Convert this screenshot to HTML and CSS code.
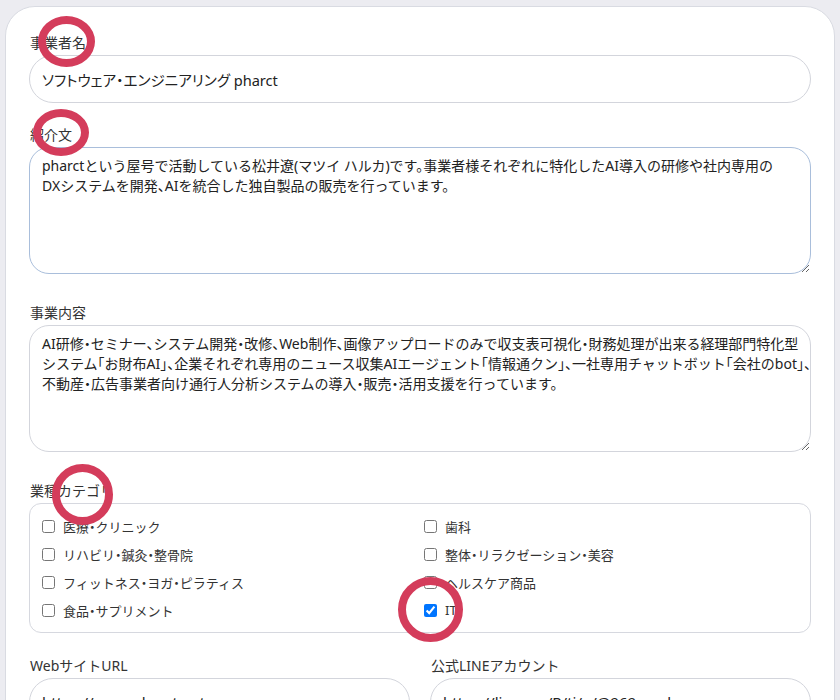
FILE: index.html
```html
<!DOCTYPE html>
<html lang="ja">
<head>
<meta charset="utf-8">
<title>事業者情報</title>
<link rel="stylesheet" href="styles.css">
</head>
<body>
<form class="card">
  <div class="field">
    <label class="label" for="name">事業者名</label>
    <input class="input input-name" id="name" type="text" value="ソフトウェア・エンジニアリング pharct">
  </div>
  <div class="field field-ta">
    <label class="label" for="intro">紹介文</label>
    <textarea class="textarea textarea-focus" id="intro" wrap="off">pharctという屋号で活動している松井遼(マツイ ハルカ)です。事業者様それぞれに特化したAI導入の研修や社内専用の
DXシステムを開発、AIを統合した独自製品の販売を行っています。</textarea>
  </div>
  <div class="field field-ta">
    <label class="label" for="biz">事業内容</label>
    <textarea class="textarea" id="biz" wrap="off">AI研修・セミナー、システム開発・改修、Web制作、画像アップロードのみで収支表可視化・財務処理が出来る経理部門特化型
システム「お財布AI」、企業それぞれ専用のニュース収集AIエージェント「情報通クン」、一社専用チャットボット「会社のbot」、
不動産・広告事業者向け通行人分析システムの導入・販売・活用支援を行っています。</textarea>
  </div>
  <div class="field field-check">
    <div class="label">業種カテゴリ</div>
    <div class="checkbox-box">
      <label class="check"><input type="checkbox"><span>医療・クリニック</span></label>
      <label class="check"><input type="checkbox"><span>歯科</span></label>
      <label class="check"><input type="checkbox"><span>リハビリ・鍼灸・整骨院</span></label>
      <label class="check"><input type="checkbox"><span>整体・リラクゼーション・美容</span></label>
      <label class="check"><input type="checkbox"><span>フィットネス・ヨガ・ピラティス</span></label>
      <label class="check"><input type="checkbox"><span>ヘルスケア商品</span></label>
      <label class="check"><input type="checkbox"><span>食品・サプリメント</span></label>
      <label class="check"><input type="checkbox" checked><span>IT</span></label>
    </div>
  </div>
  <div class="row">
    <div class="field">
      <label class="label" for="web">WebサイトURL</label>
      <input class="input" id="web" type="text" value="https://www.pharct.net">
    </div>
    <div class="field">
      <label class="label" for="line">公式LINEアカウント</label>
      <input class="input" id="line" type="text" value="https://line.me/R/ti/p/@969xxesh">
    </div>
  </div>
</form>
<div class="ring ring-1"></div>
<div class="ring ring-2"></div>
<div class="ring ring-3"></div>
<div class="ring ring-4"></div>
</body>
</html>
```
FILE: styles.css
```css
html, body {
  margin: 0;
  padding: 0;
}
body {
  background: #ececf1;
  font-family: "Noto Sans", "Noto Sans CJK JP", sans-serif;
  font-feature-settings: "halt";
  color: #333;
  height: 700px;
  overflow: hidden;
}
.card {
  box-sizing: border-box;
  width: 830px;
  margin: 6px 0 0 5px;
  background: #fff;
  border: 1px solid #d9dbe2;
  border-radius: 30px;
  padding: 26px 23px 40px;
}
.field {
  margin-bottom: 22px;
}
.field-ta {
  margin-bottom: 29px;
}
.field-check {
  margin-bottom: 23px;
}
.label {
  display: block;
  font-size: 14px;
  line-height: 20px;
  color: #333;
  margin-bottom: 2px;
  padding-left: 1px;
}
.input {
  display: block;
  box-sizing: border-box;
  width: 100%;
  height: 48px;
  border: 1px solid #d3d5dc;
  border-radius: 24px;
  padding: 0 12px;
  font-family: inherit;
  font-feature-settings: "halt";
  font-size: 15px;
  color: #222;
  background: #fff;
  outline: none;
}
.input-name {
  font-feature-settings: "palt";
  font-size: 14.6px;
}
.textarea {
  display: block;
  box-sizing: border-box;
  width: 100%;
  height: 127px;
  border: 1px solid #d3d5dc;
  border-radius: 20px;
  padding: 8px 12px;
  font-family: inherit;
  font-feature-settings: "halt";
  font-size: 14px;
  line-height: 20px;
  color: #222;
  background: #fff;
  resize: vertical;
  overflow: hidden;
  outline: none;
}
.textarea-focus {
  border-color: #a9bedb;
}
.checkbox-box {
  box-sizing: border-box;
  height: 130px;
  border: 1px solid #d6d8df;
  border-radius: 12px;
  padding: 8px 12px;
  display: grid;
  grid-template-columns: 1fr 1fr;
  column-gap: 8px;
}
.check {
  display: flex;
  align-items: center;
  gap: 8px;
  height: 28px;
  font-size: 13px;
  color: #333;
}
.check input {
  margin: 0;
  width: 13px;
  height: 13px;
}
.row {
  display: grid;
  grid-template-columns: 1fr 1fr;
  column-gap: 20px;
}
.ring {
  position: absolute;
  box-sizing: border-box;
  border: 8px solid #d43c5b;
  border-radius: 50%;
  pointer-events: none;
}
.ring-1 { left: 38px; top: 16px; width: 57px; height: 51px; }
.ring-2 { left: 33px; top: 109px; width: 56px; height: 47px; }
.ring-3 { left: 52px; top: 464px; width: 61px; height: 61px; }
.ring-4 { left: 398px; top: 577px; width: 65px; height: 65px; }
```
